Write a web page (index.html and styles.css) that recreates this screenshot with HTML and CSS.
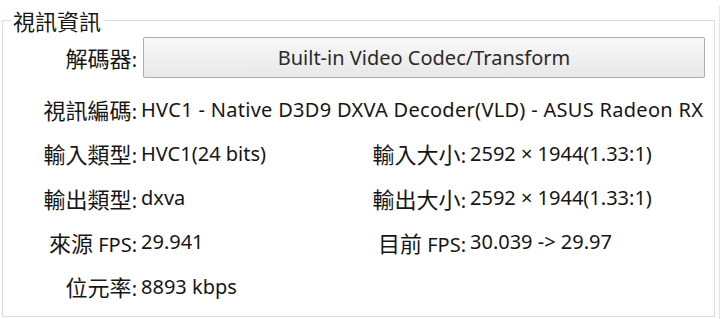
FILE: index.html
```html
<!DOCTYPE html>
<html lang="zh-Hant">
<head>
    <meta charset="UTF-8">
    <meta name="viewport" content="width=device-width, initial-scale=1.0">
    <title>視訊資訊</title>
    <link rel="stylesheet" href="styles.css">
</head>
<body>
    <div class="panel">
        <fieldset class="group">
            <legend>視訊資訊</legend>

            <div class="info-grid">
                <span class="label codec-label"><span class="zh">解碼器</span>:</span>
                <button class="codec-btn">Built-in Video Codec/Transform</button>

                <span class="label"><span class="zh">視訊編碼</span>:</span>
                <span class="value wide">HVC1 - Native D3D9 DXVA Decoder(VLD) - ASUS Radeon RX</span>

                <span class="label"><span class="zh">輸入類型</span>:</span>
                <span class="value">HVC1(24 bits)</span>
                <span class="label"><span class="zh">輸入大小</span>:</span>
                <span class="value">2592 × 1944(1.33:1)</span>

                <span class="label"><span class="zh">輸出類型</span>:</span>
                <span class="value">dxva</span>
                <span class="label"><span class="zh">輸出大小</span>:</span>
                <span class="value">2592 × 1944(1.33:1)</span>

                <span class="label"><span class="zh">來源</span> FPS:</span>
                <span class="value">29.941</span>
                <span class="label"><span class="zh">目前</span> FPS:</span>
                <span class="value">30.039 -&gt; 29.97</span>

                <span class="label"><span class="zh">位元率</span>:</span>
                <span class="value">8893 kbps</span>
            </div>
        </fieldset>
    </div>
</body>
</html>
```

FILE: styles.css
```css
html, body {
    margin: 0;
    padding: 0;
    background: #ffffff;
}

body {
    font-family: "Noto Sans", "Noto Sans CJK TC", sans-serif;
    font-size: 20px;
    color: #161616;
    overflow: hidden;
}

.panel {
    width: 719px;
    height: 318px;
    border-right: 1px solid #e3e3e3;
    border-bottom: 1px solid #e3e3e3;
}

.group {
    margin: 6px 0 0 2px;
    width: 713px;
    height: 311px;
    padding: 0 9px 0 0;
    border: 1px solid #dcdcdc;
    box-sizing: border-box;
}

.group legend {
    margin-left: 8px;
    padding: 0 2px;
    line-height: 28px;
    font-family: "Noto Sans CJK TC", sans-serif;
    font-size: 22px;
}

.info-grid {
    display: grid;
    grid-template-columns: 134px 226px 95px 1fr;
    grid-template-rows: 53px repeat(5, 44.25px);
    column-gap: 4px;
    align-items: center;
    white-space: nowrap;
}

.label {
    text-align: right;
}

.zh {
    font-family: "Noto Sans CJK TC", sans-serif;
    font-size: 22px;
}

.value.wide {
    grid-column: 2 / 5;
    letter-spacing: 0.3px;
}

.codec-label {
    align-self: start;
    margin-top: 3px;
    line-height: 41px;
}

.codec-btn {
    grid-column: 2 / 5;
    align-self: start;
    margin: 3px 0 0 2px;
    height: 41px;
    font-family: inherit;
    font-size: 20px;
    color: #2a2a2a;
    background: linear-gradient(#f8f8f8, #e8e8e8);
    border: 1px solid #adadad;
    border-radius: 2px;
}
```
